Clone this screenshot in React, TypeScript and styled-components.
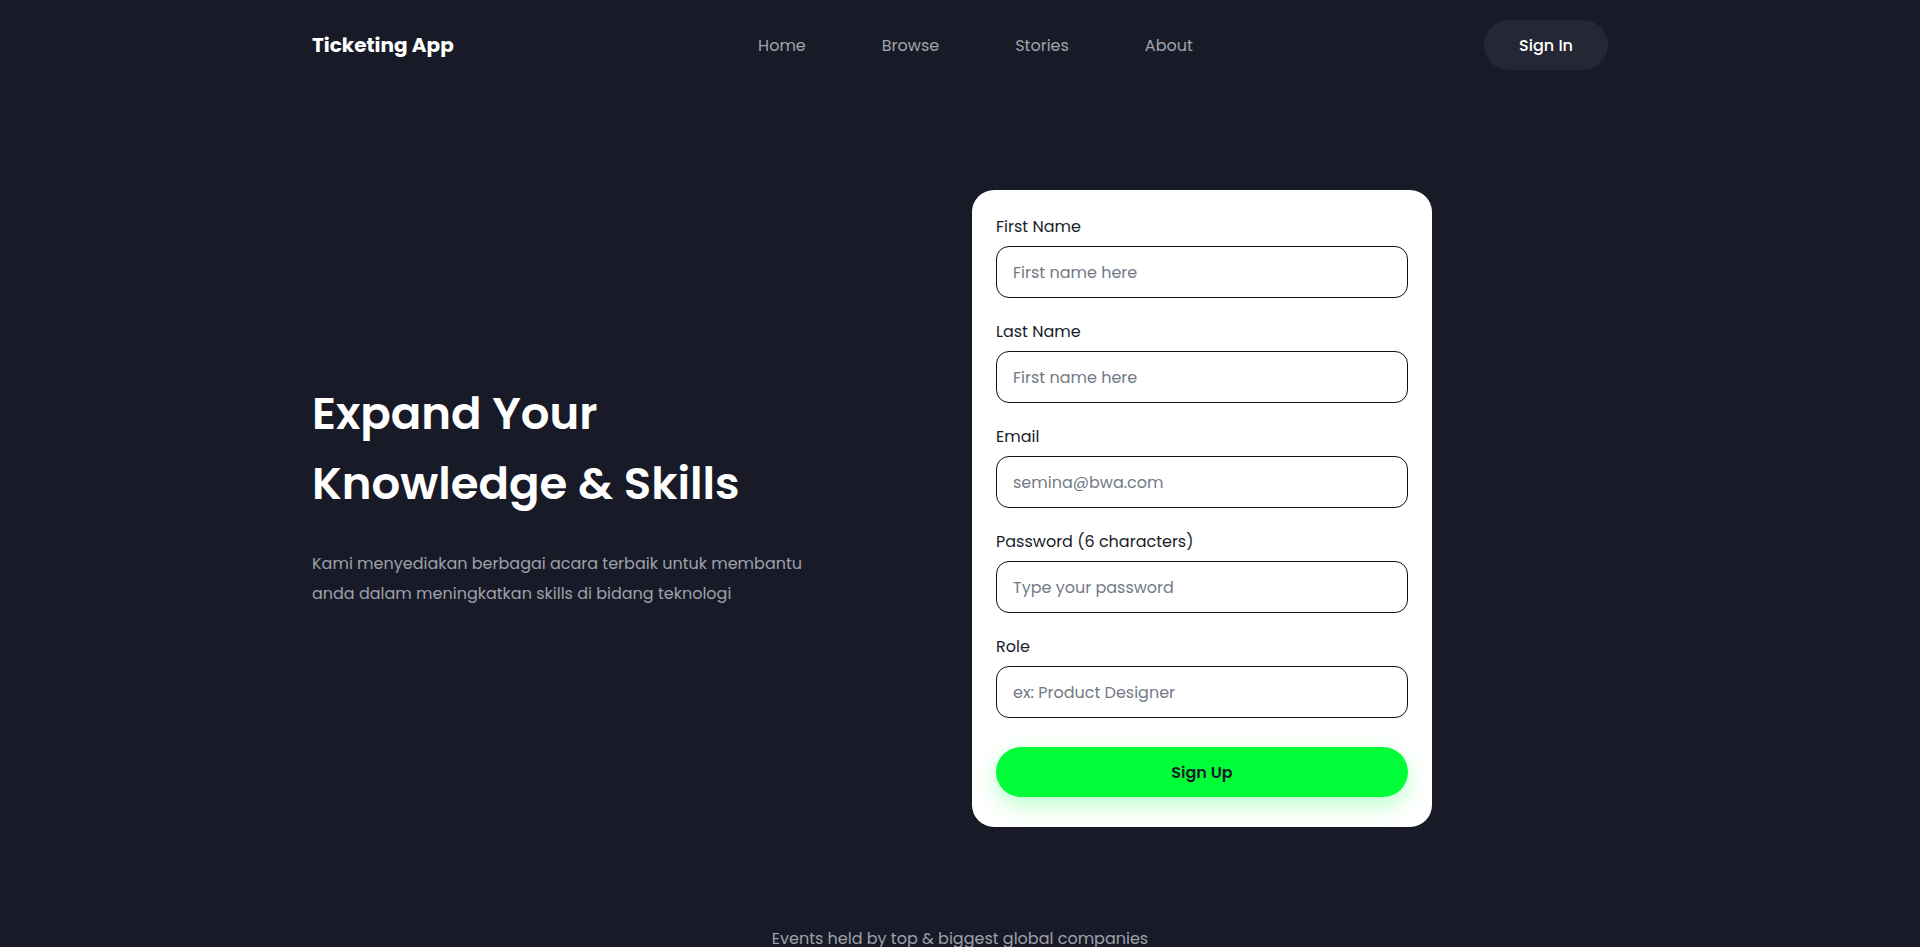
import React from "react";
import styled, { createGlobalStyle } from "styled-components";

const GlobalStyle = createGlobalStyle`
  * { box-sizing: border-box; }
  html, body { margin: 0; padding: 0; }
  body {
    background: #181b27;
    font-family: "Poppins", "Inter", "Noto Sans", sans-serif;
    -webkit-font-smoothing: antialiased;
  }
`;

const Page = styled.div`
  min-height: 100vh;
  background: #181b27;
  overflow: hidden;
`;

const Container = styled.div`
  width: 1296px;
  margin: 0 auto;
`;

const Nav = styled.nav`
  display: flex;
  align-items: center;
  justify-content: space-between;
  padding: 20px 0;
`;

const Logo = styled.div`
  color: #ffffff;
  font-size: 20px;
  line-height: 30px;
  font-weight: 700;
`;

const NavLinks = styled.ul`
  display: flex;
  gap: 76px;
  list-style: none;
  margin: 2px 0 0 13px;
  padding: 0;
`;

const NavLink = styled.li`
  color: #a0a3ac;
  font-size: 16px;
  line-height: 24px;
`;

const SignInButton = styled.button`
  height: 50px;
  padding: 0 35px;
  border: none;
  border-radius: 999px;
  background: #252834;
  color: #ffffff;
  font-family: inherit;
  font-size: 16px;
  font-weight: 500;
`;

const Hero = styled.section`
  display: grid;
  grid-template-columns: 660px 460px;
  align-items: center;
  margin-top: 100px;
`;

const Intro = styled.div`
  padding-bottom: 30px;
`;

const Title = styled.h1`
  margin: 0;
  color: #ffffff;
  font-size: 45px;
  line-height: 70px;
  font-weight: 600;
`;

const Description = styled.p`
  margin: 30px 0 0;
  color: #9ea1ab;
  font-size: 16px;
  line-height: 30px;
`;

const Card = styled.form`
  background: #ffffff;
  border-radius: 22px;
  padding: 24px 24px 30px;
  display: flex;
  flex-direction: column;
  gap: 21px;
`;

const Field = styled.label`
  display: flex;
  flex-direction: column;
  gap: 6px;
`;

const LabelText = styled.span`
  color: #1a1d2b;
  font-size: 16px;
  line-height: 26px;
`;

const Input = styled.input`
  height: 52px;
  width: 100%;
  border: 1px solid #0e1018;
  border-radius: 13px;
  padding: 0 16px;
  font-family: inherit;
  font-size: 16px;
  color: #1a1d2b;
  background: #ffffff;
  outline: none;

  &::placeholder {
    color: #737a86;
  }
`;

const SubmitButton = styled.button`
  margin-top: 8px;
  height: 50px;
  border: none;
  border-radius: 999px;
  background: #00ff38;
  color: #181b27;
  font-family: inherit;
  font-size: 16px;
  font-weight: 600;
  box-shadow: 0 8px 22px rgba(0, 255, 56, 0.28);
`;

const Companies = styled.p`
  margin: 100px 0 0;
  text-align: center;
  color: #9ea1ab;
  font-size: 16px;
  line-height: 24px;
`;

const fields = [
  { label: "First Name", placeholder: "First name here", type: "text" },
  { label: "Last Name", placeholder: "First name here", type: "text" },
  { label: "Email", placeholder: "semina@bwa.com", type: "email" },
  { label: "Password (6 characters)", placeholder: "Type your password", type: "password" },
  { label: "Role", placeholder: "ex: Product Designer", type: "text" },
];

export default function App() {
  return (
    <Page>
      <GlobalStyle />
      <Container>
        <Nav>
          <Logo>Ticketing App</Logo>
          <NavLinks>
            <NavLink>Home</NavLink>
            <NavLink>Browse</NavLink>
            <NavLink>Stories</NavLink>
            <NavLink>About</NavLink>
          </NavLinks>
          <SignInButton type="button">Sign In</SignInButton>
        </Nav>
        <Hero>
          <Intro>
            <Title>
              Expand Your
              <br />
              Knowledge &amp; Skills
            </Title>
            <Description>
              Kami menyediakan berbagai acara terbaik untuk membantu
              <br />
              anda dalam meningkatkan skills di bidang teknologi
            </Description>
          </Intro>
          <Card onSubmit={(e) => e.preventDefault()}>
            {fields.map((f) => (
              <Field key={f.label}>
                <LabelText>{f.label}</LabelText>
                <Input type={f.type} placeholder={f.placeholder} />
              </Field>
            ))}
            <SubmitButton type="submit">Sign Up</SubmitButton>
          </Card>
        </Hero>
        <Companies>Events held by top &amp; biggest global companies</Companies>
      </Container>
    </Page>
  );
}
